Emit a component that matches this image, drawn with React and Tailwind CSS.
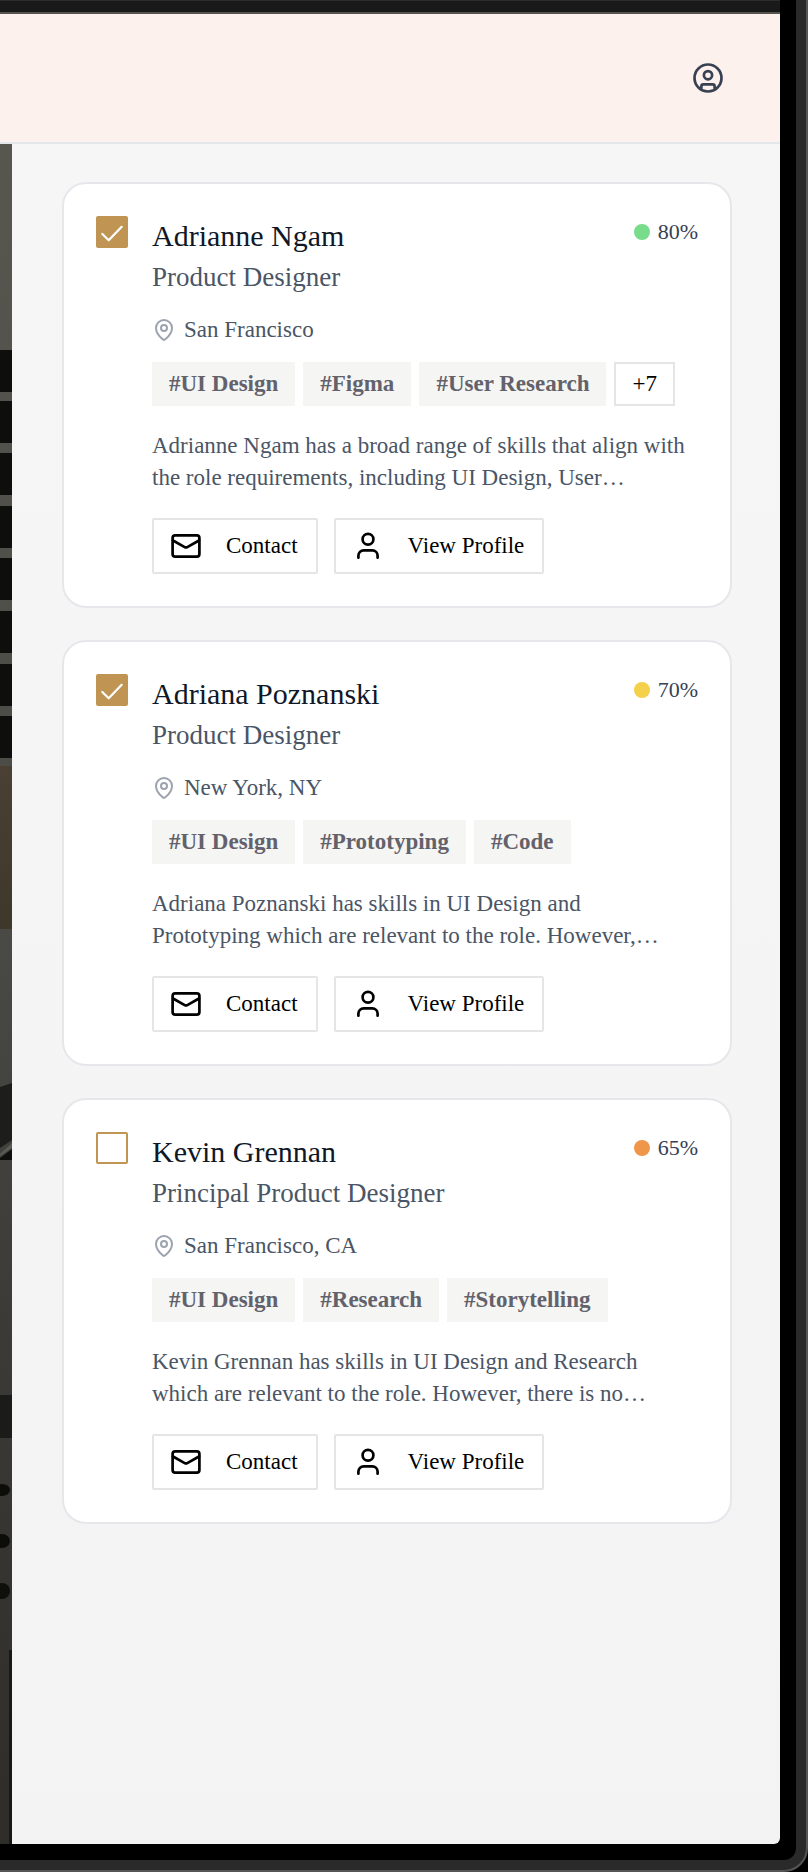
import React from "react";

const candidates = [
  {
    id: "adrianne",
    name: "Adrianne Ngam",
    role: "Product Designer",
    place: "San Francisco",
    score: "80%",
    dot: "bg-[#79dc8a]",
    checked: true,
    tags: ["#UI Design", "#Figma", "#User Research"],
    more: "+7",
    lines: [
      "Adrianne Ngam has a broad range of skills that align with",
      "the role requirements, including UI Design, User…",
    ],
  },
  {
    id: "adriana",
    name: "Adriana Poznanski",
    role: "Product Designer",
    place: "New York, NY",
    score: "70%",
    dot: "bg-[#f5d04b]",
    checked: true,
    tags: ["#UI Design", "#Prototyping", "#Code"],
    lines: [
      "Adriana Poznanski has skills in UI Design and",
      "Prototyping which are relevant to the role. However,…",
    ],
  },
  {
    id: "kevin",
    name: "Kevin Grennan",
    role: "Principal Product Designer",
    place: "San Francisco, CA",
    score: "65%",
    dot: "bg-[#f0964b]",
    checked: false,
    tags: ["#UI Design", "#Research", "#Storytelling"],
    lines: [
      "Kevin Grennan has skills in UI Design and Research",
      "which are relevant to the role. However, there is no…",
    ],
  },
];

function AccountIcon() {
  return (
    <svg viewBox="0 0 32 32" className="size-8" fill="none" stroke="#374151" strokeWidth="2.7" aria-hidden="true">
      <circle cx="16" cy="16" r="13.5" />
      <circle cx="16" cy="13.2" r="4.1" />
      <path d="M9.400 26.800v-2.600a1.900 1.900 0 0 1 1.900-1.900h9.400a1.900 1.900 0 0 1 1.900 1.900v2.600" />
    </svg>
  );
}

function PinIcon() {
  return (
    <svg viewBox="0 0 24 24" className="size-6 shrink-0" fill="none" stroke="#9ca3af" strokeWidth="2" strokeLinecap="round" strokeLinejoin="round" aria-hidden="true">
      <path d="M20 10c0 4.400-3.400 8.600-6.700 11.300a2 2 0 0 1-2.600 0C7.400 18.600 4 14.400 4 10a8 8 0 0 1 16 0" />
      <circle cx="12" cy="10" r="3" />
    </svg>
  );
}

function MailIcon() {
  return (
    <svg viewBox="0 0 32 32" className="size-8 shrink-0" fill="none" stroke="currentColor" strokeWidth="2.7" strokeLinecap="round" strokeLinejoin="round" aria-hidden="true">
      <rect x="2.6" y="5.3" width="26.8" height="21.4" rx="2.6" />
      <path d="M3 10.500l11.700 6.600a2.700 2.700 0 0 0 2.600 0L29 10.500" />
    </svg>
  );
}

function PersonIcon() {
  return (
    <svg viewBox="0 0 32 32" className="size-8 shrink-0" fill="none" stroke="currentColor" strokeWidth="2.7" strokeLinecap="round" strokeLinejoin="round" aria-hidden="true">
      <circle cx="16" cy="9.3" r="5.4" />
      <path d="M6.400 27.700v-2.100a5.300 5.300 0 0 1 5.300-5.300h8.600a5.300 5.300 0 0 1 5.300 5.300v2.100" />
    </svg>
  );
}

function ActionButton({ icon, children }) {
  return (
    <button type="button" className="flex h-14 items-center gap-6 rounded-xs border-2 border-[#e5e5e5] bg-white pr-[18px] pl-4 text-[23px] text-black">
      {icon}
      {children}
    </button>
  );
}

function CandidateCard({ person }) {
  return (
    <article className="flex gap-6 rounded-3xl border-2 border-gray-200 bg-white p-8">
      <div className="grid size-8 shrink-0">
        <input
          id={person.id}
          type="checkbox"
          defaultChecked={person.checked}
          className="peer col-start-1 row-start-1 size-8 appearance-none rounded-xs border-2 border-[#c09553] bg-white checked:bg-[#c09553]"
        />
        <svg viewBox="0 0 32 32" className="pointer-events-none invisible col-start-1 row-start-1 size-8 peer-checked:visible" fill="none" stroke="white" strokeWidth="2.2" strokeLinecap="round" strokeLinejoin="round" aria-hidden="true">
          <path d="M6.300 18l6.400 6.300L25.700 10.800" />
        </svg>
      </div>
      <div className="min-w-0 grow">
        <div className="flex items-start justify-between">
          <div>
            <h2 className="text-[30px] leading-10 text-gray-900">
              <label htmlFor={person.id}>{person.name}</label>
            </h2>
            <p className="text-[27px] leading-[42px] text-gray-600">{person.role}</p>
          </div>
          <p className="flex items-center gap-2 text-[22px] leading-8 text-gray-700">
            <span className={`size-4 rounded-full ${person.dot}`} />
            {person.score}
          </p>
        </div>
        <p className="mt-4 flex items-center gap-2 text-[23px] leading-8 text-gray-600">
          <PinIcon />
          {person.place}
        </p>
        <ul className="mt-4 flex gap-2 text-[23px] leading-8">
          {person.tags.map((tag) => (
            <li key={tag} className="flex h-11 items-center bg-[#f5f5f4] px-[17px] font-bold whitespace-nowrap text-[#63626b]">
              {tag}
            </li>
          ))}
          {person.more && (
            <li className="flex h-11 items-center border-2 border-[#e5e5e5] px-4 text-black">{person.more}</li>
          )}
        </ul>
        <p className="mt-6 text-[23px] leading-8 whitespace-nowrap text-gray-600">
          {person.lines[0]}
          <br />
          {person.lines[1]}
        </p>
        <div className="mt-6 flex gap-4">
          <ActionButton icon={<MailIcon />}>Contact</ActionButton>
          <ActionButton icon={<PersonIcon />}>View Profile</ActionButton>
        </div>
      </div>
    </article>
  );
}

const slats = [206, 257, 309, 362, 414, 467, 520, 572];

function PhotoStrip() {
  return (
    <svg viewBox="0 0 12 1700" preserveAspectRatio="none" className="w-3 shrink-0 self-stretch" aria-hidden="true">
      <defs>
        <linearGradient id="wall" x1="0" y1="0" x2="0" y2="1">
          <stop offset="0" stopColor="#57564f" />
          <stop offset="0.45" stopColor="#4a4a46" />
          <stop offset="0.7" stopColor="#3b3a36" />
          <stop offset="1" stopColor="#2f2d29" />
        </linearGradient>
        <linearGradient id="wood" x1="0" y1="0" x2="0" y2="1">
          <stop offset="0" stopColor="#4a4034" />
          <stop offset="1" stopColor="#3d382a" />
        </linearGradient>
      </defs>
      <rect width="12" height="1700" fill="url(#wall)" />
      {slats.map((y) => (
        <rect key={y} y={y} width="12" height="42" fill="#0e0e0c" />
      ))}
      <rect y="622" width="12" height="163" fill="url(#wood)" />
      <path d="M0 943l12-4v57l-12 8z" fill="#1d1d1c" />
      <path d="M0 1010l12-11v5l-12 8z" fill="#5a5c56" />
      <path d="M0 1014l12-9v11H0z" fill="#0f0f0d" />
      <rect y="1251" width="12" height="43" fill="#1b1b1a" />
      <ellipse cx="2" cy="1346" rx="8" ry="6" fill="#0c0c09" />
      <ellipse cx="2" cy="1397" rx="8" ry="7" fill="#0c0c09" />
      <ellipse cx="2" cy="1447" rx="8" ry="8" fill="#0f0f0b" />
      <rect x="9" y="1506" width="3" height="194" fill="#181816" />
    </svg>
  );
}

export default function App() {
  return (
    <div className="min-h-screen bg-black font-['Liberation_Serif',serif]">
      <div className="flex min-h-screen rounded-br-3xl border-r-2 border-b-2 border-[#555555] bg-[#2a2a2b] pr-[10px] pb-[10px]">
        <div className="flex grow flex-col rounded-br-xl bg-black pr-4 pb-4">
          <div className="h-[14px] border-t border-b-2 border-t-[#2c2c2c] border-b-[#555451] bg-[#191919]" />
          <header className="flex h-[130px] items-center justify-end border-b-2 border-[#e3e6eb] bg-[#fcf1ed] px-14">
            <button type="button" aria-label="Account">
              <AccountIcon />
            </button>
          </header>
          <div className="flex grow overflow-hidden rounded-br-md bg-linear-to-b from-[#f6f6f6] to-[#f3f3f3]">
            <PhotoStrip />
            <main className="flex min-w-0 grow flex-col gap-8 py-[38px] pr-12 pl-[50px]">
              {candidates.map((person) => (
                <CandidateCard key={person.id} person={person} />
              ))}
            </main>
          </div>
        </div>
      </div>
    </div>
  );
}
